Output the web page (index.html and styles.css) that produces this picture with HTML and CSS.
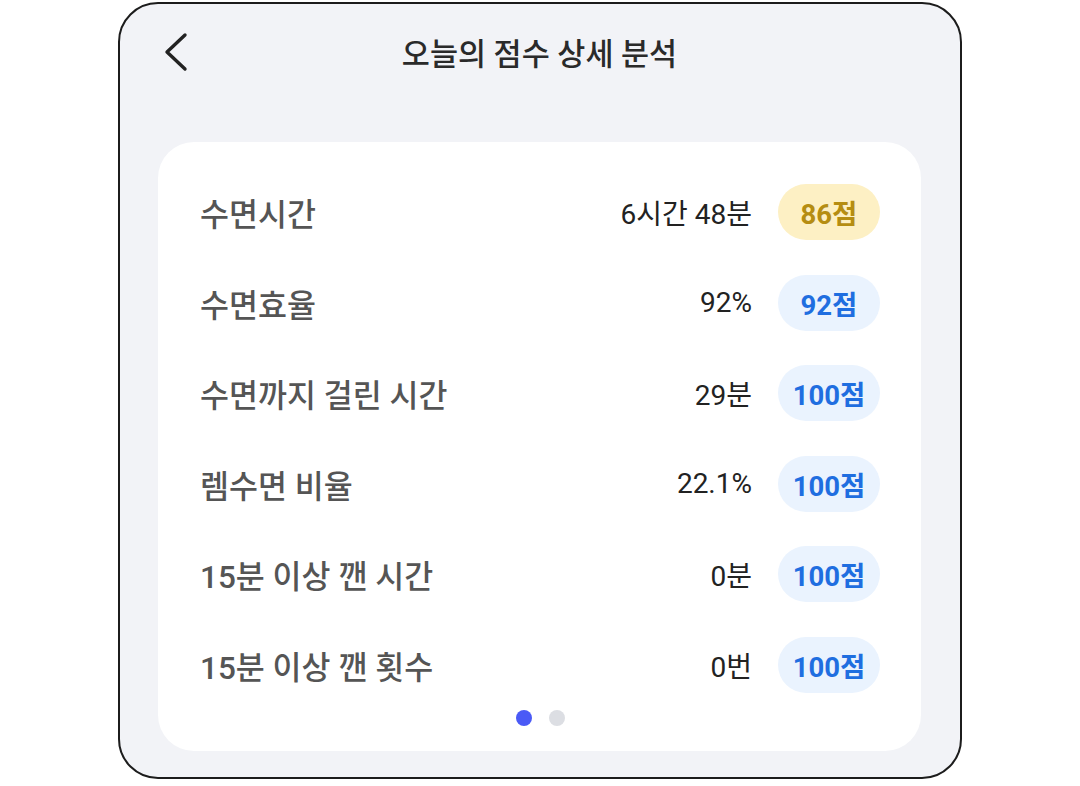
FILE: index.html
```html
<!DOCTYPE html>
<html lang="ko">
<head>
<meta charset="utf-8">
<title>오늘의 점수 상세 분석</title>
<link rel="stylesheet" href="styles.css">
</head>
<body>
<div class="screen">
  <header class="topbar">
    <button class="back" aria-label="뒤로">
      <svg width="26" height="40" viewBox="0 0 26 40"><polyline points="21,3 3,20 21,37" fill="none" stroke="#222" stroke-width="3.4" stroke-linecap="round" stroke-linejoin="round"/></svg>
    </button>
    <h1 class="title">오늘의 점수 상세 분석</h1>
  </header>
  <section class="card">
    <ul class="rows">
      <li class="row"><span class="label">수면시간</span><span class="value">6시간 48분</span><span class="pill warn">86점</span></li>
      <li class="row"><span class="label">수면효율</span><span class="value">92%</span><span class="pill good">92점</span></li>
      <li class="row"><span class="label">수면까지 걸린 시간</span><span class="value">29분</span><span class="pill good">100점</span></li>
      <li class="row"><span class="label">렘수면 비율</span><span class="value">22.1%</span><span class="pill good">100점</span></li>
      <li class="row"><span class="label">15분 이상 깬 시간</span><span class="value">0분</span><span class="pill good">100점</span></li>
      <li class="row"><span class="label">15분 이상 깬 횟수</span><span class="value">0번</span><span class="pill good">100점</span></li>
    </ul>
    <div class="dots"><span class="dot active"></span><span class="dot"></span></div>
  </section>
</div>
</body>
</html>
```
FILE: styles.css
```css
* { box-sizing: border-box; }
html, body { margin: 0; padding: 0; background: #ffffff; }
body { font-family: Roboto, "Noto Sans CJK KR", "Noto Sans", sans-serif; }

.screen {
  width: 844px;
  height: 777px;
  margin: 2px 0 0 118px;
  border: 2px solid #1c1c1c;
  border-radius: 40px;
  background: #f2f3f7;
  padding: 0 39px 0 38px;
  overflow: hidden;
}

.topbar {
  position: relative;
  height: 96px;
  display: flex;
  align-items: center;
  justify-content: center;
}
.back {
  position: absolute;
  left: 6px;
  top: 28px;
  padding: 0;
  border: 0;
  background: none;
  display: flex;
}
.title {
  margin: 0;
  font-size: 30.5px;
  font-weight: 500;
  color: #2a2a2a;
  letter-spacing: 0;
}

.card {
  margin-top: 42px;
  background: #ffffff;
  border-radius: 36px;
  padding: 42px 41px 25px 42px;
}
.rows {
  list-style: none;
  margin: 0;
  padding: 0;
  display: flex;
  flex-direction: column;
  gap: 34.6px;
}
.row {
  display: flex;
  align-items: center;
  height: 56px;
}
.label {
  flex: 1;
  font-size: 31.5px;
  font-weight: 500;
  color: #555555;
}
.value {
  font-size: 28px;
  color: #222222;
  margin-right: 26px;
}
.pill {
  width: 102px;
  height: 56px;
  border-radius: 28px;
  display: flex;
  align-items: center;
  justify-content: center;
  font-size: 27.5px;
  font-weight: 700;
}
.pill.warn { background: #fdf0c4; color: #b58d12; }
.pill.good { background: #eaf3fe; color: #1f6ee0; }

.dots {
  display: flex;
  justify-content: center;
  gap: 17px;
  margin-top: 17px;
}
.dot {
  width: 16px;
  height: 16px;
  border-radius: 50%;
  background: #dcdee3;
}
.dot.active { background: #4a5af6; }
```
